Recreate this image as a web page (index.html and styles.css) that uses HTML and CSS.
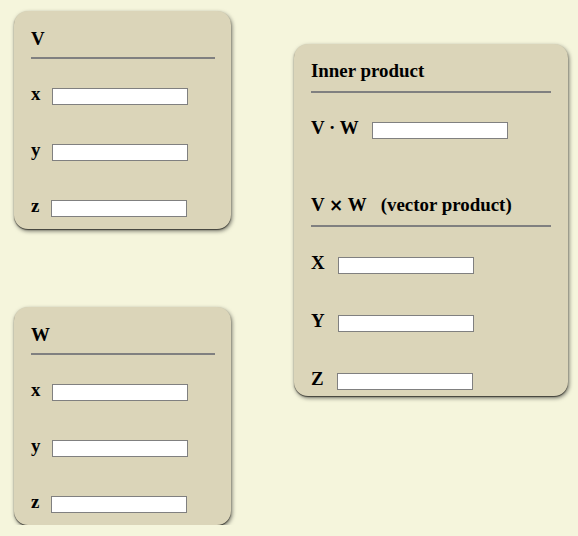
FILE: index.html
```html
<!DOCTYPE html>
<html lang="en">
<head>
<meta charset="utf-8">
<title>Vectors</title>
<link rel="stylesheet" href="styles.css">
</head>
<body>
<div class="page">
  <div class="left-col">
    <section class="card card-small">
      <h3 class="card-title">V</h3>
      <hr class="rule">
      <div class="row first"><span class="lbl">x</span><input class="field" type="text"></div>
      <div class="row"><span class="lbl">y</span><input class="field" type="text"></div>
      <div class="row"><span class="lbl">z</span><input class="field" type="text"></div>
    </section>
    <section class="card card-small">
      <h3 class="card-title">W</h3>
      <hr class="rule">
      <div class="row first"><span class="lbl">x</span><input class="field" type="text"></div>
      <div class="row"><span class="lbl">y</span><input class="field" type="text"></div>
      <div class="row"><span class="lbl">z</span><input class="field" type="text"></div>
    </section>
  </div>
  <section class="card card-big">
    <h3 class="card-title">Inner product</h3>
    <hr class="rule">
    <div class="row first"><span class="lbl">V · W</span><input class="field" type="text"></div>
    <h3 class="card-title second">V <span class="cross">×</span> W&nbsp;&nbsp; (vector product)</h3>
    <hr class="rule">
    <div class="row first wide"><span class="lbl">X</span><input class="field" type="text"></div>
    <div class="row wide"><span class="lbl">Y</span><input class="field" type="text"></div>
    <div class="row wide"><span class="lbl">Z</span><input class="field" type="text"></div>
  </section>
</div>
</body>
</html>
```
FILE: styles.css
```css
html, body {
  margin: 0;
  padding: 0;
  background: #f5f5dc;
}

body {
  font-family: "Liberation Serif", "Times New Roman", serif;
  font-weight: bold;
  font-size: 18.9px;
  color: #000;
}

.page {
  display: flex;
  align-items: flex-start;
  padding: 11px 0 0 14px;
}

.left-col {
  display: flex;
  flex-direction: column;
  gap: 78px;
  width: 217px;
}

.card {
  background: #dbd5b9;
  border-radius: 14px;
  box-shadow: 0 1px 1px rgba(0, 0, 0, 0.55), 1px 2px 4px rgba(0, 0, 0, 0.55);
  box-sizing: border-box;
}

.card-small {
  width: 217px;
  padding: 17px 16px 12px 17px;
}

.card-big {
  width: 274px;
  margin-left: 63px;
  margin-top: 33px;
  padding: 16px 17px 6px 17px;
}

.card-title {
  margin: 0;
  font-size: 18.9px;
  line-height: 22px;
  font-weight: bold;
  white-space: nowrap;
}

.card-title.second {
  margin-top: 55px;
}

.cross {
  font-family: "DejaVu Sans", sans-serif;
  font-size: 17px;
}

.rule {
  margin: 7px 0 0 0;
  border: 0;
  height: 2px;
  background: #808080;
}

.card-big .rule {
  margin-top: 9px;
}

.row {
  display: flex;
  align-items: flex-start;
  margin-top: 39px;
}

.row.first {
  margin-top: 29px;
}

.row.wide {
  margin-top: 41px;
}

.row.wide.first {
  margin-top: 30px;
}

.lbl {
  line-height: 17px;
  margin-top: -3px;
  white-space: nowrap;
}

.field {
  box-sizing: border-box;
  width: 136px;
  height: 17px;
  margin: 0 0 0 12px;
  padding: 0 2px;
  border: 1px solid #808080;
  background: #fff;
  font-size: 12px;
  outline: none;
}

.card-big .field {
  margin-left: 13px;
}
```
